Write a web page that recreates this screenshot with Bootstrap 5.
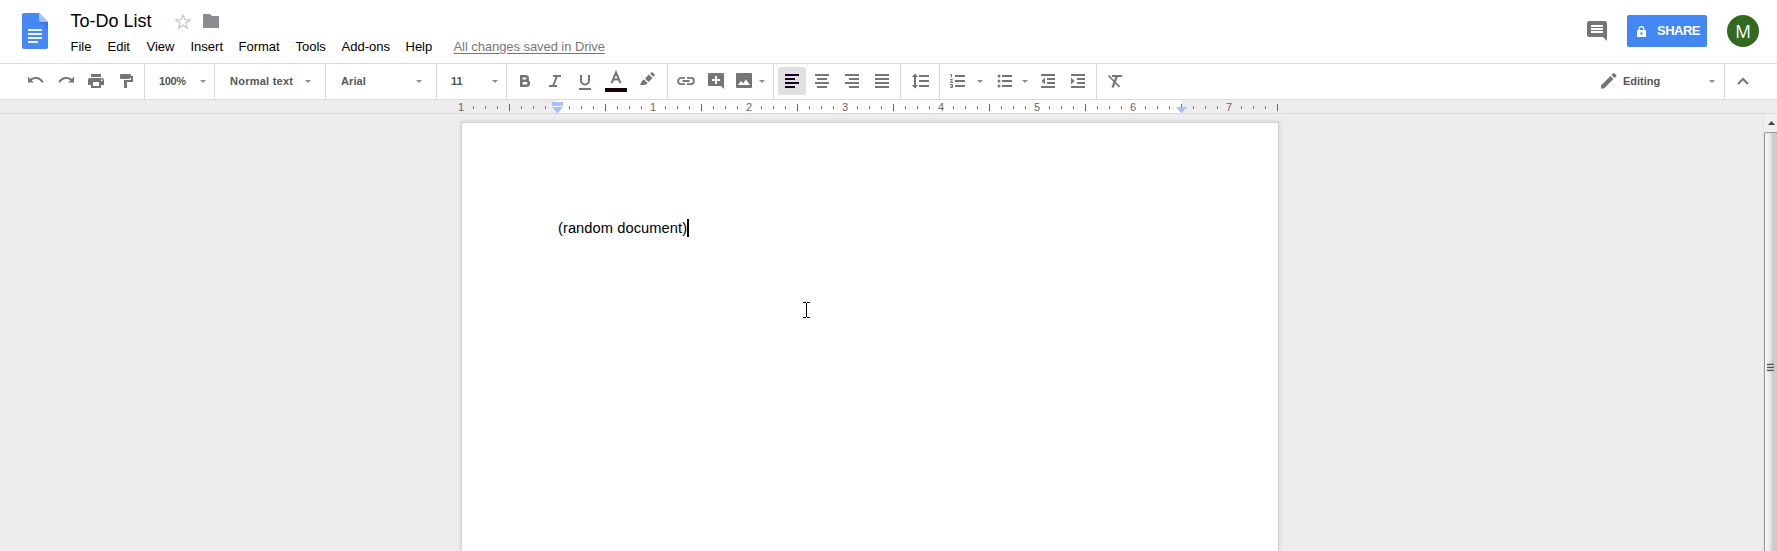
<!DOCTYPE html>
<html lang="en">
<head>
<meta charset="utf-8">
<title>To-Do List</title>
<link href="https://cdn.jsdelivr.net/npm/bootstrap@5.3.0/dist/css/bootstrap.min.css" rel="stylesheet">
<style>
body{font-family:"Liberation Sans",Arial,sans-serif;color:#000;background:#fff;height:551px;overflow:hidden;line-height:1}
svg{display:block;flex:none}
.top{height:64px;border-bottom:1px solid #dadada}
.doc-icon{margin:13px 0 0 22px}
.doc-info{margin-left:22.5px;padding-top:11px}
.title-row{height:20px}
.doc-title{font-size:18px;line-height:22px;width:105px;letter-spacing:0}
.star{margin-left:-1px}
.folder{margin-left:12px}
.menus{margin-top:8px;height:16px;font-size:13px}
.menus a{color:#000;text-decoration:none;line-height:16px;white-space:nowrap}
.menus a.saved{color:#777;text-decoration:underline;text-underline-offset:2px;line-height:15px;letter-spacing:-.07px}
.header-actions{padding:15px 18px 0 0}
.share{background:#4387f5;color:#fff;border:0;border-radius:2px;width:80px;height:32px;font-size:13px;font-weight:700;padding:0 0 0 9px;line-height:32px;letter-spacing:-.5px}
.avatar{width:32px;height:32px;border-radius:50%;background:#33691e;color:#fff;font:17.5px/32px "Open Sans",sans-serif;margin-left:20px}
.tools{height:36px;border-bottom:1px solid #dadada;color:#757575}
.grp{height:35px;padding-bottom:1px;border-right:1px solid #dadada}
.tb{width:30px;display:flex;justify-content:center;align-items:center;flex:none}
.active-tool{height:28px;width:28px;margin:0 1px;background:#e0e0e0;border-radius:2px;color:#1a0025}
.lbl{font-size:11px;font-weight:700;color:#555;white-space:nowrap;line-height:14px}
.caret{width:0;height:0;border:3px solid transparent;border-top-color:#8c8c8c;border-bottom:0;flex:none}
.ruler{height:14px;background:#ededed;border-bottom:1px solid #d9d9d9}
.scale{width:828px;height:13px;margin-left:455px;background:linear-gradient(to right,transparent 102px,#fff 102px,#fff 726px,transparent 726px)}
.tick{width:12px;height:13px;display:flex;align-items:center;justify-content:center;font-size:11px;color:#666;flex:none;padding-top:1px}
.tick i{width:1px;height:3px;background:#777;margin-left:1px}
.tick i.half{height:7px;background:#666}
.indent{position:absolute;top:2px}
.work{height:437px;background:#ededed}
.sheet{margin:8px 0 0 461px;width:818px;height:440px;background:#fff;border:1px solid #d0d0d0;box-shadow:0 0 4px 1px #d8d8d8;padding:97px 0 0 96px;font-size:14.67px;line-height:17px}
.doc-text{letter-spacing:.07px}
.text-caret{width:2px;height:18px;background:#000;margin-top:-1px}
.pointer{position:absolute;left:803px;top:302px}
.sbar{width:14px;height:437px;background:#f0f0f0;border-left:1px solid #e2e2e2}
.thumb{margin-top:6px;height:440px;border:1px solid #979797;border-right:0;border-radius:2px 0 0 0;background:linear-gradient(to right,#f6f6f6,#e6e6e8 45%,#cfcfd2 60%,#c9c9cc)}
</style>
</head>
<body>
<header class="top d-flex">
  <svg class="doc-icon" width="26" height="36" viewBox="0 0 26 36"><path fill="#4688f4" d="M2 0h15l9 9v25a2 2 0 0 1-2 2H2a2 2 0 0 1-2-2V2a2 2 0 0 1 2-2z"/><path fill="#3b78e2" d="M18 9h8v8z"/><path fill="#a4c5fa" d="M17 0l9 9h-7a2 2 0 0 1-2-2z"/><path fill="#f3f5fb" d="M6 16h14v2H6zM6 20h14v2H6zM6 24h14v2H6zM6 28h10v2H6z"/></svg>
  <div class="doc-info">
    <div class="title-row d-flex align-items-center">
      <span class="doc-title">To-Do List</span>
      <svg class="star" width="16" height="15" viewBox="0 0 16 15"><path d="M8 1l1.800 4.600 5.200.3-4 3.100 1.300 5L8 11.200 3.700 14 5 9 1 5.900l5.200-.3z" fill="none" stroke="#c4c4c4" stroke-width="1.200"/></svg>
      <svg class="folder" width="16" height="14" viewBox="0 0 16 14"><path fill="#8d8b90" d="M1 0h6l2 2h7v12H0V1a1 1 0 0 1 1-1z"/></svg>
    </div>
    <nav class="menus d-flex">
      <a href="#" style="width:37px">File</a><a href="#" style="width:39px">Edit</a><a href="#" style="width:44px">View</a><a href="#" style="width:48px">Insert</a><a href="#" style="width:57px">Format</a><a href="#" style="width:46px">Tools</a><a href="#" style="width:64px">Add-ons</a><a href="#" style="width:48px">Help</a><a href="#" class="saved">All changes saved in Drive</a>
    </nav>
  </div>
  <div class="header-actions ms-auto d-flex">
    <svg width="20" height="20" viewBox="0 0 20 20" style="margin:6px 20px 0 0"><path fill="#757575" d="M2 0h16a2 2 0 0 1 2 2v18l-4-4H2a2 2 0 0 1-2-2V2a2 2 0 0 1 2-2z"/><path fill="#fff" d="M4 4h12v2H4zM4 7h12v2H4zM4 10h12v2H4z"/></svg>
    <button class="share d-flex align-items-center">
      <svg width="9" height="11" viewBox="0 0 9 11" style="margin:0 11px 0 1px"><path d="M2.200 4.500V3a2.300 2.300 0 0 1 4.600 0v1.500" fill="none" stroke="#fff" stroke-width="1.200"/><path fill="#fff" fill-rule="evenodd" d="M0 4h9v7H0zM4.500 6.300a1.200 1.200 0 1 0 0 2.400 1.200 1.200 0 0 0 0-2.400z"/></svg>SHARE</button>
    <div class="avatar text-center">M</div>
  </div>
</header>
<div class="tools d-flex">
  <div class="grp d-flex align-items-center" style="width:145px;padding-left:21px">
    <span class="tb"><svg width="18" height="18" viewBox="0 0 18 18"><path fill="currentColor" d="M1 4.500v6h6L4.600 8.400C5.800 7.600 7.200 7 8.800 7c2.700 0 4.900 1.400 5.900 3.700l2-.7C15.500 7 12.500 5 8.800 5 6.700 5 4.800 5.700 3.300 6.900z"/></svg></span>
    <span class="tb"><svg width="18" height="18" viewBox="0 0 18 18"><path fill="currentColor" d="M17 4.500v6h-6l2.400-2.100C12.200 7.600 10.800 7 9.200 7c-2.700 0-4.900 1.400-5.900 3.700l-2-.7C2.500 7 5.500 5 9.200 5c2.100 0 4 .7 5.500 1.900z"/></svg></span>
    <span class="tb"><svg width="18" height="18" viewBox="0 0 18 18"><path fill="currentColor" fill-rule="evenodd" d="M4 2h10v3H4zM3 6h12a2 2 0 0 1 2 2v5h-3v3H4v-3H1V8a2 2 0 0 1 2-2zM6 10v4h6v-4zM14 7.500v1.500h1.500V7.500z"/></svg></span>
    <span class="tb"><svg width="18" height="18" viewBox="0 0 18 18"><path fill="currentColor" d="M4 2h9a1 1 0 0 1 1 1v1h2v6H10v6H7V8h7V6h-1a1 1 0 0 1-1 1H4a1 1 0 0 1-1-1V3a1 1 0 0 1 1-1z"/></svg></span>
  </div>
  <div class="grp d-flex align-items-center" style="width:70px;padding-left:14px"><span class="lbl" style="width:41px;letter-spacing:-.4px">100%</span><i class="caret"></i></div>
  <div class="grp d-flex align-items-center" style="width:111px;padding-left:15px"><span class="lbl" style="width:75px;letter-spacing:.25px">Normal text</span><i class="caret"></i></div>
  <div class="grp d-flex align-items-center" style="width:111px;padding-left:15px"><span class="lbl" style="width:75px;letter-spacing:.1px">Arial</span><i class="caret"></i></div>
  <div class="grp d-flex align-items-center" style="width:70px;padding-left:14px"><span class="lbl" style="width:41px">11</span><i class="caret"></i></div>
  <div class="grp d-flex align-items-center" style="width:161px;padding-left:3px">
    <span class="tb"><svg width="18" height="18" viewBox="0 0 18 18"><path fill="none" stroke="currentColor" stroke-width="2.600" d="M5.300 4.200h4.200a2.200 2.200 0 0 1 0 4.500H5.300zM5.300 8.700h5a2.500 2.500 0 0 1 0 5h-5z"/></svg></span>
    <span class="tb"><svg width="18" height="18" viewBox="0 0 18 18"><path fill="none" stroke="currentColor" stroke-width="2" d="M7 4h8M3 14h8M11 4L7 14"/></svg></span>
    <span class="tb"><svg width="18" height="18" viewBox="0 0 18 18"><path fill="none" stroke="currentColor" stroke-width="2" d="M5 3v5.500a4 4 0 0 0 8 0V3M3 17h12"/></svg></span>
    <span class="tb" style="width:32px"><svg width="22" height="22" viewBox="0 0 22 22"><path fill="none" stroke="currentColor" stroke-width="2" d="M6.500 13.200L11 2.500l4.500 10.700M8 9.500h6"/><path fill="#1a0009" d="M0 18h22v4H0z"/></svg></span>
    <span class="tb"><svg width="18" height="18" viewBox="0 0 18 18"><path fill="currentColor" d="M12 1.500L14 0l3 2.700-1.500 2.300zM11 2.500L14.500 6l-4 4L7 6.500zM6 7.500L9.500 11c-1 2-3.500 2-8 2C3.500 11.500 3 9 6 7.500z"/></svg></span>
  </div>
  <div class="grp d-flex align-items-center" style="width:106px;padding-left:3px">
    <span class="tb"><svg width="18" height="18" viewBox="0 0 18 18"><path fill="none" stroke="currentColor" stroke-width="1.800" d="M8 5.900H4.200a3.100 3.100 0 0 0 0 6.200H8M10 5.900h3.800a3.100 3.100 0 0 1 0 6.200H10M5.500 9h7"/></svg></span>
    <span class="tb"><svg width="18" height="18" viewBox="0 0 18 18"><path fill="currentColor" d="M2 1h14a1 1 0 0 1 1 1v15l-3-3H2a1 1 0 0 1-1-1V2a1 1 0 0 1 1-1z"/><path stroke="#fff" stroke-width="2" d="M5 8h8M9 4v8"/></svg></span>
    <span class="tb" style="width:26px"><svg width="18" height="18" viewBox="0 0 18 18"><path fill="currentColor" d="M2 1h14a1 1 0 0 1 1 1v13a1 1 0 0 1-1 1H2a1 1 0 0 1-1-1V2a1 1 0 0 1 1-1z"/><path fill="#fff" d="M3 13l3-4 2 2.500L11 7.500l4 5.500z"/></svg></span>
    <i class="caret" style="margin-left:2px"></i>
  </div>
  <div class="grp d-flex align-items-center" style="width:127px;padding-left:3px">
    <span class="tb active-tool"><svg width="18" height="18" viewBox="0 0 18 18"><path fill="currentColor" d="M2 2h14v2H2zM2 6h10v2H2zM2 10h14v2H2zM2 14h10v2H2z"/></svg></span>
    <span class="tb"><svg width="18" height="18" viewBox="0 0 18 18"><path fill="currentColor" d="M2 2h14v2H2zM4 6h10v2H4zM2 10h14v2H2zM4 14h10v2H4z"/></svg></span>
    <span class="tb"><svg width="18" height="18" viewBox="0 0 18 18"><path fill="currentColor" d="M2 2h14v2H2zM6 6h10v2H6zM2 10h14v2H2zM6 14h10v2H6z"/></svg></span>
    <span class="tb"><svg width="18" height="18" viewBox="0 0 18 18"><path fill="currentColor" d="M2 2h14v2H2zM2 6h14v2H2zM2 10h14v2H2zM2 14h14v2H2z"/></svg></span>
  </div>
  <div class="grp d-flex align-items-center" style="width:39px;padding-left:4px">
    <span class="tb"><svg width="18" height="18" viewBox="0 0 18 18"><path fill="currentColor" d="M8 3h10v2H8zM8 8h10v2H8zM8 13h10v2H8zM4 1.500L7.200 5H5v8h2.200L4 16.500.8 13H3V5H.8z"/></svg></span>
  </div>
  <div class="grp d-flex align-items-center" style="width:157px;padding-left:3px">
    <span class="tb"><svg width="18" height="18" viewBox="0 0 18 18"><path fill="currentColor" d="M6 3h10v2H6zM6 8h10v2H6zM6 13h10v2H6z"/><path fill="none" stroke="currentColor" d="M1 2.500h1.500v3M1 7.500h2.500L1.500 10.500h2.500M1 12.500h2.500v3H1M1.500 14h2"/></svg></span><i class="caret" style="margin:0 9px 0 4px"></i>
    <span class="tb" style="width:26px"><svg width="18" height="18" viewBox="0 0 18 18"><path fill="currentColor" d="M6 3h10v2H6zM6 8h10v2H6zM6 13h10v2H6z"/><g fill="currentColor"><circle cx="3" cy="4" r="1.500"/><circle cx="3" cy="9" r="1.500"/><circle cx="3" cy="14" r="1.500"/></g></svg></span><i class="caret" style="margin:0 5px 0 4px"></i>
    <span class="tb"><svg width="18" height="18" viewBox="0 0 18 18"><path fill="currentColor" d="M2 2h14v2H2zM8 6h8v2H8zM8 10h8v2H8zM2 14h14v2H2zM6 5.500v7L2.500 9z"/></svg></span>
    <span class="tb"><svg width="18" height="18" viewBox="0 0 18 18"><path fill="currentColor" d="M2 2h14v2H2zM8 6h8v2H8zM8 10h8v2H8zM2 14h14v2H2zM2 5.500v7L5.500 9z"/></svg></span>
  </div>
  <div class="grp border-0 d-flex align-items-center" style="padding-left:3px">
    <span class="tb"><svg width="18" height="18" viewBox="0 0 18 18"><path fill="none" stroke="currentColor" stroke-width="2.200" d="M6 4h10M11 4L6.500 15.500"/><path fill="none" stroke="currentColor" stroke-width="1.800" d="M2.500 3.500l11 11.500"/></svg></span>
  </div>
  <div class="grp ms-auto d-flex align-items-center" style="width:132px;padding-left:8px">
    <svg width="16" height="16" viewBox="0 0 16 16"><path fill="currentColor" d="M0 12.500L9.500 3l3 3L3 15.500H0zM10.500 2L12 .500a1.200 1.200 0 0 1 1.700 0L15 1.800a1.200 1.200 0 0 1 0 1.700L13.500 5z"/></svg>
    <span class="lbl" style="width:86px;margin-left:6px">Editing</span><i class="caret"></i>
  </div>
  <div class="grp border-0 d-flex align-items-center" style="width:52px;padding-left:12px"><svg width="12" height="8" viewBox="0 0 12 8"><path fill="none" stroke="currentColor" stroke-width="2" d="M1 7l5-5 5 5"/></svg></div>
</div>
<div class="ruler">
  <div class="scale d-flex position-relative" id="scale">
    <svg class="indent" style="left:97px" width="11" height="11" viewBox="0 0 11 11"><path fill="#a4c2f9" d="M0 0h11v4H0zM0 5h11L6 11H5z"/></svg>
    <svg class="indent" style="left:721px;top:7px" width="11" height="6" viewBox="0 0 11 6"><path fill="#a4c2f9" d="M0 0h11L6 6H5z"/></svg>
  </div>
</div>
<main class="work d-flex justify-content-between overflow-hidden">
  <div class="sheet d-flex"><span class="doc-text">(random document)</span><span class="text-caret"></span></div>
  <div class="sbar">
    <svg width="13" height="12" viewBox="0 0 13 12"><path fill="#444" d="M4 11l3.500-4 3.500 4z"/></svg>
    <div class="thumb"><svg width="12" height="240" viewBox="0 0 12 240"><path stroke="#fff" d="M2 232.500h7M2 235.500h7M2 238.500h7"/><path stroke="#555" stroke-width="1.300" d="M2 231.500h7M2 234.500h7M2 237.500h7"/></svg></div>
  </div>
</main>
<svg class="pointer" width="7" height="16" viewBox="0 0 7 16"><path fill="none" stroke="#000" d="M0 .500h3M4 .500h3M3.500 1v14M0 15.500h3M4 15.500h3"/></svg>
<script src="https://cdn.jsdelivr.net/npm/bootstrap@5.3.0/dist/js/bootstrap.bundle.min.js"></script>
<script>
// One cell per eighth of an inch, from one inch left of the margin to 7.5 inches
const scale = document.getElementById('scale');
for (let n = -8; n <= 60; n++) {
  const cell = document.createElement('span');
  cell.className = 'tick';
  if (n % 8 === 0) { if (n) cell.textContent = Math.abs(n / 8); }
  else { const t = document.createElement('i'); if (n % 4 === 0) t.className = 'half'; cell.append(t); }
  scale.append(cell);
}
</script>
</body>
</html>
